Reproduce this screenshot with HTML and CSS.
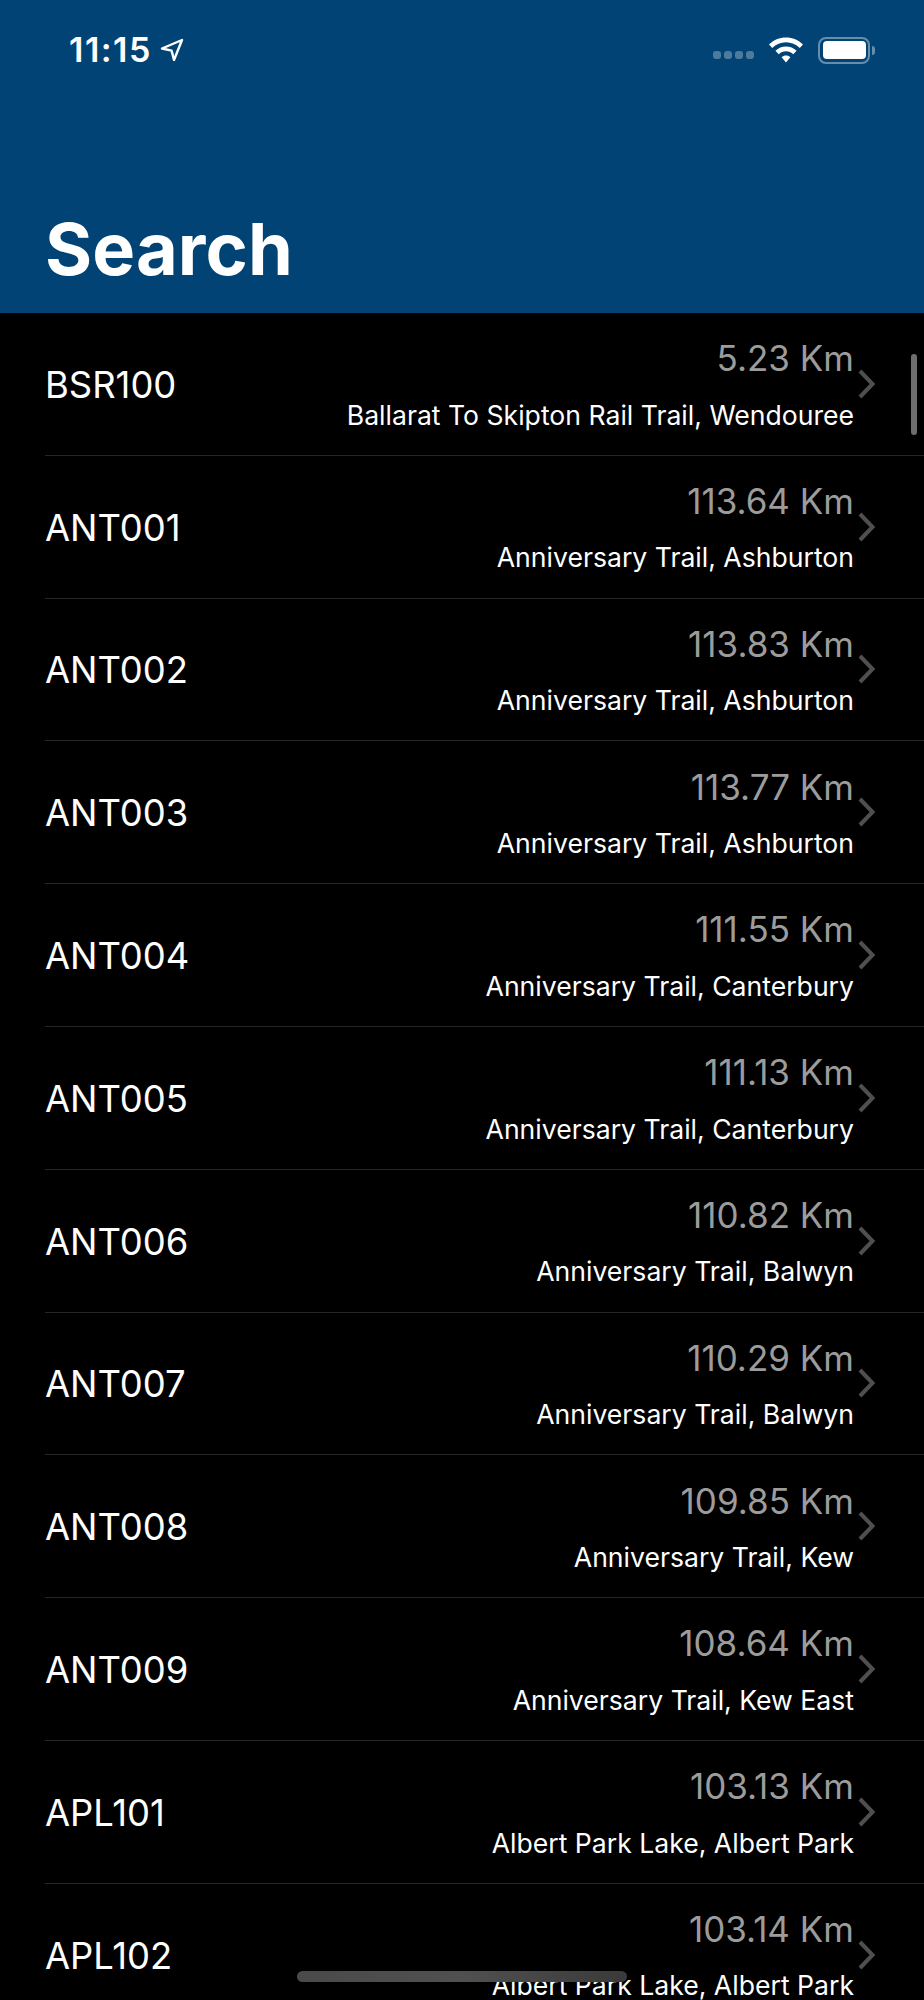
FILE: index.html
```html
<!DOCTYPE html>
<html lang="en">
<head>
<meta charset="utf-8">
<title>Search</title>
<link rel="stylesheet" href="styles.css">
</head>
<body>
<div class="app">
  <header class="nav">
    <div class="status">
      <div class="status-left">
        <span class="time">11:15</span>
        <svg class="loc" viewBox="0 0 24 24" width="24" height="24"><path d="M2 10.500 L22 2 L14 22 L11.600 12.600 Z" fill="none" stroke="#fff" stroke-width="2.400" stroke-linejoin="round"/></svg>
      </div>
      <div class="status-right">
        <div class="dots"><i></i><i></i><i></i><i></i></div>
        <svg class="wifi" viewBox="0 0 36 28" width="36" height="28"><path d="M18 1.500C11.500 1.500 5.500 4 1 8.500L4.200 12C8 8.300 12.800 6.200 18 6.200S28 8.300 31.800 12L35 8.500C30.500 4 24.500 1.500 18 1.500Z" fill="#fff"/><path d="M18 10.500C14 10.500 10.300 12 7.400 14.800L10.700 18.300C12.700 16.400 15.200 15.300 18 15.300S23.300 16.400 25.300 18.300L28.600 14.800C25.700 12 22 10.500 18 10.500Z" fill="#fff"/><path d="M18 19.500C16.300 19.500 14.800 20.100 13.600 21.200L18 26.500L22.400 21.200C21.200 20.100 19.700 19.500 18 19.500Z" fill="#fff"/></svg>
        <div class="battery"><div class="battery-fill"></div></div>
        <div class="battery-cap"></div>
      </div>
    </div>
    <h1 class="title">Search</h1>
  </header>
  <main class="list">
    <div class="row"><span class="code">BSR100</span><div class="info"><span class="dist">5.23 Km</span><span class="place">Ballarat To Skipton Rail Trail, Wendouree</span></div><svg class="chev" viewBox="0 0 20 32" width="20" height="32"><path d="M3 3 L15.500 16 L3 29" fill="none" stroke="#4f4f4f" stroke-width="4"/></svg></div>
    <div class="row"><span class="code">ANT001</span><div class="info"><span class="dist">113.64 Km</span><span class="place">Anniversary Trail, Ashburton</span></div><svg class="chev" viewBox="0 0 20 32" width="20" height="32"><path d="M3 3 L15.500 16 L3 29" fill="none" stroke="#4f4f4f" stroke-width="4"/></svg></div>
    <div class="row"><span class="code">ANT002</span><div class="info"><span class="dist">113.83 Km</span><span class="place">Anniversary Trail, Ashburton</span></div><svg class="chev" viewBox="0 0 20 32" width="20" height="32"><path d="M3 3 L15.500 16 L3 29" fill="none" stroke="#4f4f4f" stroke-width="4"/></svg></div>
    <div class="row"><span class="code">ANT003</span><div class="info"><span class="dist">113.77 Km</span><span class="place">Anniversary Trail, Ashburton</span></div><svg class="chev" viewBox="0 0 20 32" width="20" height="32"><path d="M3 3 L15.500 16 L3 29" fill="none" stroke="#4f4f4f" stroke-width="4"/></svg></div>
    <div class="row"><span class="code">ANT004</span><div class="info"><span class="dist">111.55 Km</span><span class="place">Anniversary Trail, Canterbury</span></div><svg class="chev" viewBox="0 0 20 32" width="20" height="32"><path d="M3 3 L15.500 16 L3 29" fill="none" stroke="#4f4f4f" stroke-width="4"/></svg></div>
    <div class="row"><span class="code">ANT005</span><div class="info"><span class="dist">111.13 Km</span><span class="place">Anniversary Trail, Canterbury</span></div><svg class="chev" viewBox="0 0 20 32" width="20" height="32"><path d="M3 3 L15.500 16 L3 29" fill="none" stroke="#4f4f4f" stroke-width="4"/></svg></div>
    <div class="row"><span class="code">ANT006</span><div class="info"><span class="dist">110.82 Km</span><span class="place">Anniversary Trail, Balwyn</span></div><svg class="chev" viewBox="0 0 20 32" width="20" height="32"><path d="M3 3 L15.500 16 L3 29" fill="none" stroke="#4f4f4f" stroke-width="4"/></svg></div>
    <div class="row"><span class="code">ANT007</span><div class="info"><span class="dist">110.29 Km</span><span class="place">Anniversary Trail, Balwyn</span></div><svg class="chev" viewBox="0 0 20 32" width="20" height="32"><path d="M3 3 L15.500 16 L3 29" fill="none" stroke="#4f4f4f" stroke-width="4"/></svg></div>
    <div class="row"><span class="code">ANT008</span><div class="info"><span class="dist">109.85 Km</span><span class="place">Anniversary Trail, Kew</span></div><svg class="chev" viewBox="0 0 20 32" width="20" height="32"><path d="M3 3 L15.500 16 L3 29" fill="none" stroke="#4f4f4f" stroke-width="4"/></svg></div>
    <div class="row"><span class="code">ANT009</span><div class="info"><span class="dist">108.64 Km</span><span class="place">Anniversary Trail, Kew East</span></div><svg class="chev" viewBox="0 0 20 32" width="20" height="32"><path d="M3 3 L15.500 16 L3 29" fill="none" stroke="#4f4f4f" stroke-width="4"/></svg></div>
    <div class="row"><span class="code">APL101</span><div class="info"><span class="dist">103.13 Km</span><span class="place">Albert Park Lake, Albert Park</span></div><svg class="chev" viewBox="0 0 20 32" width="20" height="32"><path d="M3 3 L15.500 16 L3 29" fill="none" stroke="#4f4f4f" stroke-width="4"/></svg></div>
    <div class="row"><span class="code">APL102</span><div class="info"><span class="dist">103.14 Km</span><span class="place">Albert Park Lake, Albert Park</span></div><svg class="chev" viewBox="0 0 20 32" width="20" height="32"><path d="M3 3 L15.500 16 L3 29" fill="none" stroke="#4f4f4f" stroke-width="4"/></svg></div>
  </main>
  <div class="scrollbar"></div>
  <div class="home"></div>
</div>
</body>
</html>
```
FILE: styles.css
```css
* { box-sizing: border-box; }
html, body { margin: 0; padding: 0; background: #000; }
.app {
  position: relative;
  width: 924px;
  height: 2000px;
  overflow: hidden;
  background: #000;
  font-family: Inter, "Liberation Sans", sans-serif;
  color: #fff;
}
.nav {
  height: 313px;
  background: #004374;
  display: flex;
  flex-direction: column;
  justify-content: space-between;
  padding: 30px 0 20px 45px;
}
.status { display: flex; justify-content: space-between; align-items: center; height: 40px; padding-right: 49px; }
.status-left { display: flex; align-items: center; gap: 8px; padding-left: 24px; }
.time { font-size: 34px; font-weight: 600; letter-spacing: 1.500px; line-height: 40px; }
.status-right { display: flex; align-items: center; }
.dots { display: flex; gap: 3px; margin-right: 14px; margin-top: 9px; }
.dots i { width: 8px; height: 8px; border-radius: 3px; background: rgba(255,255,255,.3); }
.wifi { margin-right: 14px; }
.battery { width: 52px; height: 27px; border: 2.500px solid rgba(255,255,255,.4); border-radius: 8px; padding: 2.500px; }
.battery-fill { width: 100%; height: 100%; background: #fff; border-radius: 4px; }
.battery-cap { width: 3px; height: 9px; margin-left: 2px; background: rgba(255,255,255,.4); border-radius: 0 3px 3px 0; }
.title { margin: 0; font-size: 72px; font-weight: 700; line-height: 88px; letter-spacing: 0.1px; }
.row {
  position: relative;
  height: 142.800px;
  margin-left: 45px;
  display: flex;
  align-items: center;
  justify-content: space-between;
  padding-right: 47px;
  border-bottom: 1px solid #262626;
}
.code { font-size: 36.400px; line-height: 44px; margin-top: 2px; }
.info { flex: 1; display: flex; flex-direction: column; align-items: flex-end; margin-right: 3px; }
.dist { font-size: 35px; line-height: 42px; color: #9c9c9c; }
.place { font-size: 26.600px; line-height: 32px; margin-top: 19.500px; }
.chev { flex: none; }
.scrollbar { position: absolute; left: 911px; top: 354px; width: 6px; height: 81px; border-radius: 3px; background: #6e6e6e; }
.home { position: absolute; left: 297px; top: 1971px; width: 330px; height: 11px; border-radius: 6px; background: linear-gradient(90deg, #4a4a4a, #505050 50%, #3a3a3a); }
```
